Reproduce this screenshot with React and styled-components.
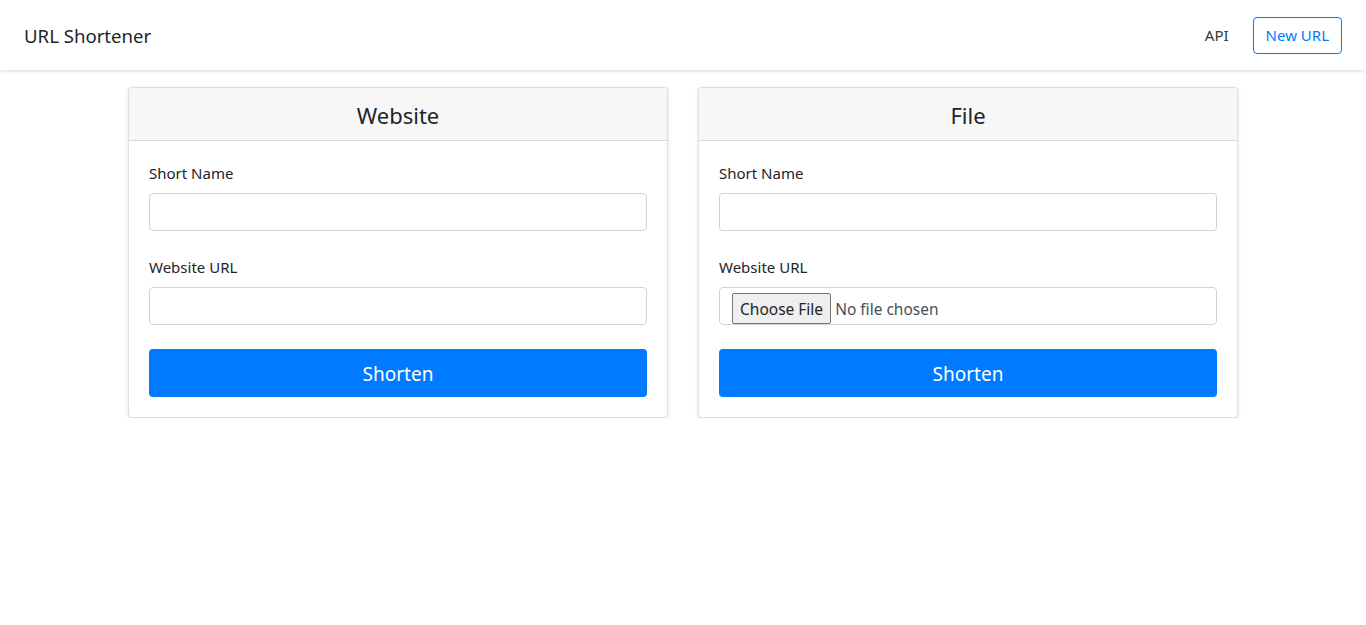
import React from "react";
import styled, { createGlobalStyle } from "styled-components";

const GlobalStyle = createGlobalStyle`
  * { box-sizing: border-box; }
  body {
    margin: 0;
    background: #fff;
    color: #212529;
    font-family: "Noto Sans", "Open Sans", sans-serif;
    font-size: 15px;
  }
`;

const Navbar = styled.nav`
  height: 70px;
  display: flex;
  align-items: center;
  justify-content: space-between;
  padding: 0 24px;
  background: #fff;
  box-shadow: 0 1px 4px rgba(0, 0, 0, 0.16);
  position: relative;
`;

const Brand = styled.div`
  font-size: 18.6px;
  color: #212529;
  margin-top: 1px;
`;

const NavRight = styled.div`
  display: flex;
  align-items: center;
  gap: 24px;
`;

const NavLink = styled.span`
  font-size: 15px;
  color: #343a40;
`;

const OutlineButton = styled.button`
  height: 37px;
  padding: 0 12px;
  border: 1px solid #007bff;
  border-radius: 4px;
  background: #fff;
  color: #007bff;
  font-family: inherit;
  font-size: 15px;
`;

const Container = styled.main`
  width: 1140px;
  margin: 17px auto 0;
  display: grid;
  grid-template-columns: 1fr 1fr;
  gap: 30px;
  padding: 0 15px;
`;

const Card = styled.section`
  border: 1px solid rgba(0, 0, 0, 0.125);
  border-radius: 4px;
  box-shadow: 0 1px 4px rgba(0, 0, 0, 0.12);
  background: #fff;
`;

const CardHeader = styled.div`
  height: 53px;
  display: flex;
  align-items: center;
  justify-content: center;
  background: #f7f7f7;
  border-bottom: 1px solid rgba(0, 0, 0, 0.125);
  border-radius: 4px 4px 0 0;
  font-size: 22px;
  padding-top: 2px;
`;

const CardBody = styled.div`
  padding: 21px 20px 20px;
`;

const Field = styled.div`
  margin-bottom: 24px;

  & + & {
    padding-top: 1px;
  }
`;

const Label = styled.label`
  display: block;
  margin-bottom: 9px;
  font-size: 15px;
  line-height: 22px;
`;

const Input = styled.input`
  display: block;
  width: 100%;
  height: 38px;
  padding: 6px 12px;
  border: 1px solid #ced4da;
  border-radius: 4px;
  font-family: inherit;
  font-size: 15px;
  outline: none;
`;

const FileBox = styled.div`
  height: 38px;
  border: 1px solid #ced4da;
  border-radius: 4px;
  padding: 5px 12px 0;
  display: flex;
  align-items: flex-start;
`;

const FileInput = styled.input`
  font-family: inherit;
  font-size: 15.5px;
  color: #495057;

  &::file-selector-button {
    font-family: inherit;
    font-size: 15.5px;
    color: #212529;
    background: #efefef;
    border: 1px solid #767676;
    border-radius: 2px;
    height: 31px;
    padding: 0 7px;
    margin-right: 4px;
  }
`;

const SubmitButton = styled.button`
  display: block;
  width: 100%;
  height: 48px;
  border: none;
  border-radius: 4px;
  background: #007bff;
  color: #fff;
  font-family: inherit;
  font-size: 19px;
  padding-top: 2px;
`;

const App = () => {
  return (
    <>
      <GlobalStyle />
      <Navbar>
        <Brand>URL Shortener</Brand>
        <NavRight>
          <NavLink>API</NavLink>
          <OutlineButton>New URL</OutlineButton>
        </NavRight>
      </Navbar>
      <Container>
        <Card>
          <CardHeader>Website</CardHeader>
          <CardBody>
            <Field>
              <Label>Short Name</Label>
              <Input type="text" />
            </Field>
            <Field>
              <Label>Website URL</Label>
              <Input type="text" />
            </Field>
            <SubmitButton>Shorten</SubmitButton>
          </CardBody>
        </Card>
        <Card>
          <CardHeader>File</CardHeader>
          <CardBody>
            <Field>
              <Label>Short Name</Label>
              <Input type="text" />
            </Field>
            <Field>
              <Label>Website URL</Label>
              <FileBox>
                <FileInput type="file" />
              </FileBox>
            </Field>
            <SubmitButton>Shorten</SubmitButton>
          </CardBody>
        </Card>
      </Container>
    </>
  );
};

export default App;
